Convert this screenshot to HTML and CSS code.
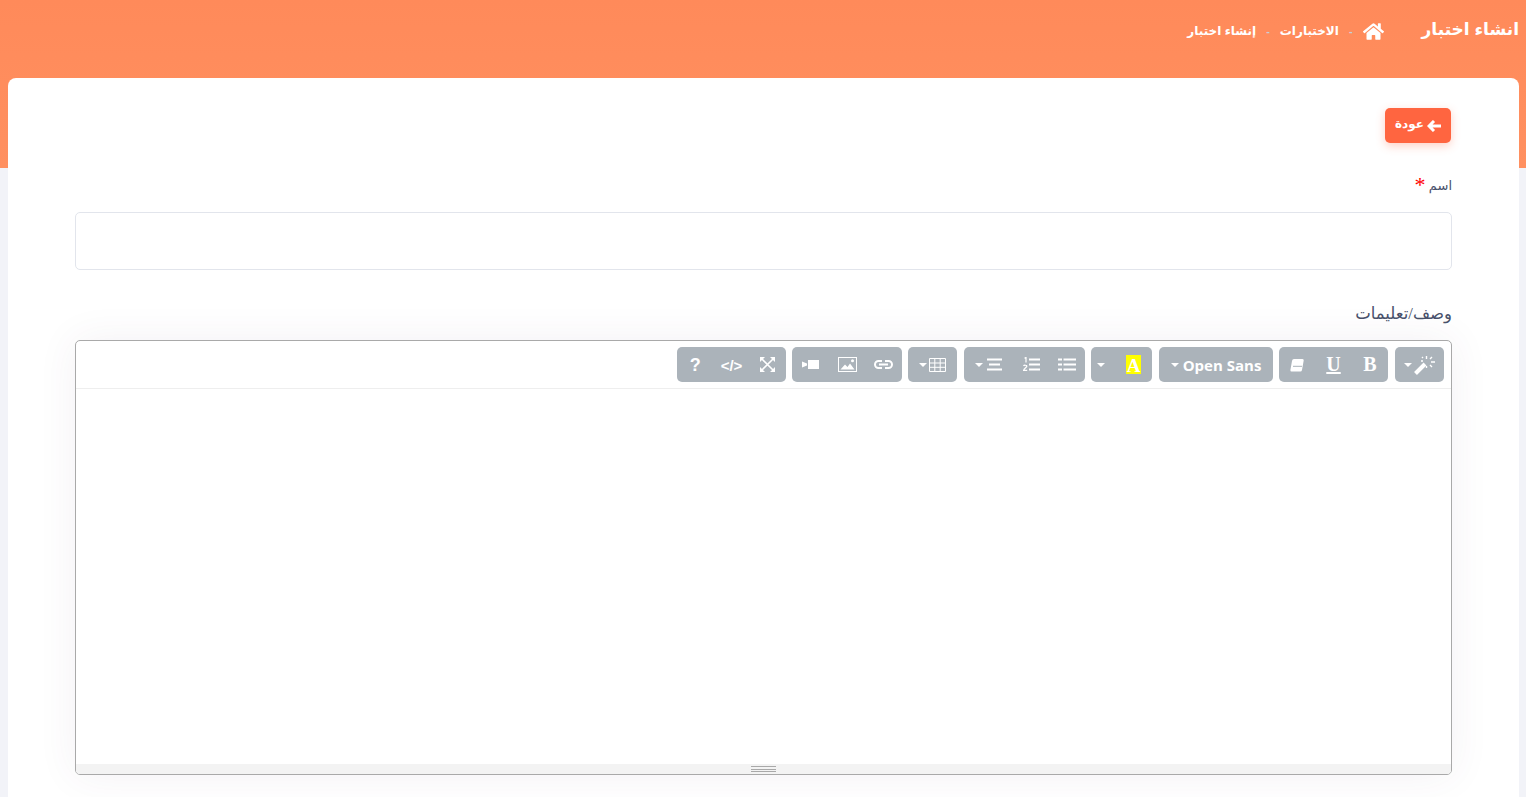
FILE: index.html
```html
<!DOCTYPE html>
<html lang="ar" dir="rtl">
<head>
<meta charset="utf-8">
<title>انشاء اختبار</title>
<link rel="stylesheet" href="styles.css">
</head>
<body>
<header class="hero">
  <h1 class="hero-title">انشاء اختبار</h1>
  <nav class="crumbs">
    <svg class="home" viewBox="0 0 576 512"><path fill="currentColor" d="M280.400 148.300 96 300.100V464a16 16 0 0 0 16 16l112.100-.3a16 16 0 0 0 15.900-16V368a16 16 0 0 1 16-16h64a16 16 0 0 1 16 16v95.600a16 16 0 0 0 16 16.100L464 480a16 16 0 0 0 16-16V300L295.700 148.300a12.200 12.200 0 0 0-15.300 0zM571.600 251.500 488 182.600V44.100a12 12 0 0 0-12-12h-56a12 12 0 0 0-12 12v72.600L318.500 43a48 48 0 0 0-61 0L4.300 251.500a12 12 0 0 0-1.600 16.900l25.500 31A12 12 0 0 0 45.200 301l235.200-193.700a12.200 12.200 0 0 1 15.300 0L530.900 301a12 12 0 0 0 16.900-1.600l25.500-31a12 12 0 0 0-1.700-16.900z"/></svg>
    <span class="sep">-</span>
    <span class="crumb">الاختبارات</span>
    <span class="sep">-</span>
    <span class="crumb">إنشاء اختبار</span>
  </nav>
</header>
<main class="card">
  <a class="back" href="#">
    <svg class="back-arrow" viewBox="0 0 14 12"><path d="M14 6H2.500M7 1 2 6l5 5" fill="none" stroke="currentColor" stroke-width="3"/></svg>
    <span class="back-text">عودة</span>
  </a>
  <label class="label first">اسم <span class="req">*</span></label>
  <div class="input"></div>
  <label class="label second">وصف/تعليمات</label>
  <section class="editor">
    <div class="toolbar">
      <div class="group g-magic">
        <svg width="21" height="20" viewBox="0 0 21 20"><path d="M1.500 18.500 11 9" stroke="#fff" stroke-width="4" fill="none"/><path d="M12.500 1v3M12.500 11v2M17 7h4M7 6h2M16 4l2-2M16 10l2 2M9 3 8 2" stroke="#fff" stroke-width="1.400" fill="none"/></svg>
        <span class="caret"></span>
      </div>
      <div class="group g-style">
        <span class="tb bold">B</span>
        <span class="tb under">U</span>
        <span class="tb"><svg width="14" height="14" viewBox="0 0 14 14"><path d="M4 1h8.500q1.500 0 1.200 1.500L12 12q-.3 1.500-1.700 1.500H1.500Q.2 13.500.4 12L2 3q.3-2 2-2z" fill="#fff"/><path d="M3 8.300h9" stroke="#abb3ba" stroke-width="1"/></svg></span>
      </div>
      <div class="group g-font"><span class="font-name">Open Sans</span><span class="caret"></span></div>
      <div class="group g-color">
        <span class="hl">A</span>
        <span class="caret"></span>
      </div>
      <div class="group g-para">
        <span class="tb cell"><svg width="18" height="13" viewBox="0 0 18 13"><path d="M0 1.500h4M5.500 1.500H18M0 6.500h4M5.500 6.500H18M0 11.500h4M5.500 11.500H18" stroke="#fff" stroke-width="2.200"/></svg></span>
        <span class="tb cell"><svg width="17" height="15" viewBox="0 0 17 15"><path d="M6 2.500h11M6 7.500h11M6 12.500h11" stroke="#fff" stroke-width="2.200"/><path d="M1.500 1.200 3 .5v5M.5 9c.5-1.200 3.500-1 3.300.4-.1 1-2.800 2-3.200 3.900H4.200" stroke="#fff" stroke-width="1.200" fill="none"/></svg></span>
        <span class="tb align"><svg width="15" height="13" viewBox="0 0 15 13"><path d="M0 1.500h15M2 6.500h11M0 11.500h15" stroke="#fff" stroke-width="2"/></svg><span class="caret"></span></span>
      </div>
      <div class="group g-table">
        <svg width="17" height="14" viewBox="0 0 17 14"><path d="M.5.500h16v13H.5zM.5 5h16M.5 9.300h16M5.800.5v13M11.200.5v13" stroke="#fff" fill="none"/></svg>
        <span class="caret"></span>
      </div>
      <div class="group g-insert">
        <span class="tb"><svg width="19" height="9" viewBox="0 0 19 9"><path d="M8 1H4.500a3.500 3.500 0 0 0 0 7H8M11 1h3.500a3.500 3.500 0 0 1 0 7H11" fill="none" stroke="#fff" stroke-width="2"/><path d="M5 4.500h9" stroke="#fff" stroke-width="2"/></svg></span>
        <span class="tb"><svg width="19" height="15" viewBox="0 0 19 15"><rect x=".5" y=".5" width="18" height="14" fill="none" stroke="#fff"/><path d="M2.500 12.500l4.500-5 2.500 2.500 2.500-3.500 4.500 6z" fill="#fff"/><circle cx="14.500" cy="3.800" r="1.500" fill="#fff"/></svg></span>
        <span class="tb"><svg width="17" height="9" viewBox="0 0 17 9"><rect x="6" y="0" width="11" height="9" fill="#fff"/><path d="M0 1.500 5 3.500v2L0 7.500z" fill="#fff"/></svg></span>
      </div>
      <div class="group g-misc">
        <span class="tb"><svg width="15" height="15" viewBox="0 0 15 15"><path d="M2 2l11 11M13 2 2 13" stroke="#fff" stroke-width="1.600"/><path d="M0 0h5L0 5zM15 0h-5l5 5zM0 15h5l-5-5zM15 15h-5l5-5z" fill="#fff"/></svg></span>
        <span class="tb code">&lt;/&gt;</span>
        <span class="tb help">?</span>
      </div>
    </div>
    <div class="edit-area"></div>
    <div class="resizer"><span class="grip"></span></div>
  </section>
</main>
</body>
</html>
```
FILE: styles.css
```css
* { box-sizing: border-box; }
html, body { height: 100%; }
body {
  margin: 0;
  background: #f2f3f8;
  font-family: "DejaVu Sans", "Noto Sans", sans-serif;
  color: #48465b;
  display: flex;
  flex-direction: column;
}
.hero {
  height: 168px;
  flex: none;
  background: linear-gradient(180deg, #ff8a5a 0%, #ff9060 100%);
  display: flex;
  align-items: flex-start;
  gap: 38px;
  padding: 15px 7px 0 0;
  color: #fff;
}
.hero-title {
  margin: 2px 0 0;
  font-size: 17px;
  line-height: 26px;
  font-weight: 700;
  font-family: "Liberation Sans", "DejaVu Sans", sans-serif;
}
.crumbs {
  display: flex;
  align-items: center;
  gap: 10px;
  height: 32px;
  font-size: 12px;
  font-weight: 700;
  font-family: "Liberation Sans", "DejaVu Sans", sans-serif;
}
.home { width: 21px; height: 19px; }
.sep { color: #c9cdd6; font-size: 11px; }
.card {
  flex: 1;
  margin: -90px 7px 0 8px;
  background: #fff;
  border-radius: 8px 8px 0 0;
  padding: 30px 67px 0 67px;
  display: flex;
  flex-direction: column;
  align-items: stretch;
}
.back {
  align-self: flex-start;
  margin-right: 1px;
  width: 66px;
  height: 35px;
  border-radius: 5px;
  background: #ff6540;
  box-shadow: 0 3px 10px rgba(255, 101, 64, .3);
  color: #fff;
  text-decoration: none;
  font-size: 12px;
  font-weight: 700;
  font-family: "Liberation Sans", "DejaVu Sans", sans-serif;
  display: flex;
  align-items: center;
  justify-content: center;
  gap: 3px;
}
.back-arrow { width: 14px; height: 12px; }
.back-text { padding-bottom: 3px; }
.label {
  display: block;
  line-height: 20px;
  font-family: "Liberation Serif", "DejaVu Sans", serif;
  color: #48516b;
}
.label.first { margin-top: 33px; font-size: 13px; }
.label.second { margin-top: 34px; font-size: 16.500px; }
.req { color: #f00; font-size: 22px; line-height: 16px; vertical-align: -2px; }
.input {
  margin-top: 16px;
  height: 58px;
  border: 1px solid #e2e5ec;
  border-radius: 5px;
}
.editor {
  margin-top: 16px;
  height: 435px;
  flex: none;
  border: 1px solid #a9a9a9;
  border-radius: 5px;
  background: #fff;
  display: flex;
  flex-direction: column;
  box-shadow: 0 0 40px rgba(82, 63, 105, .07);
  overflow: hidden;
}
.toolbar {
  height: 48px;
  flex: none;
  padding: 6px 7px 0;
  display: flex;
  gap: 6px;
  border-bottom: 1px solid #eeeeee;
}
.group {
  height: 35px;
  border-radius: 5px;
  background: #abb3ba;
  display: flex;
  align-items: center;
  justify-content: center;
  color: #fff;
}
.g-magic, .g-table { width: 49px; gap: 2px; }
.g-magic { margin-left: 1px; }
.g-style, .g-misc { width: 109px; }
.g-insert { width: 110px; }
.g-font { width: 114px; gap: 4px; margin-left: 1px; }
.g-color {
  width: 61px;
  justify-content: space-between;
  padding: 0 11px 0 6px;
}
.g-para { width: 121px; margin-left: 1px; }
.tb {
  flex: 1;
  display: flex;
  align-items: center;
  justify-content: center;
  gap: 4px;
  font-weight: 700;
}
.tb.cell { flex: none; width: 36px; }
.caret {
  width: 0;
  height: 0;
  flex: none;
  border-left: 4px solid transparent;
  border-right: 4px solid transparent;
  border-top: 4px solid #fff;
}
.bold, .under {
  font-family: "Liberation Serif", serif;
  font-size: 20px;
}
.under { text-decoration: underline; }
.font-name {
  font-family: "Open Sans", sans-serif;
  font-size: 15px;
  font-weight: 700;
}
.hl {
  display: block;
  width: 15px;
  height: 19px;
  background: #ff0;
  color: #fff;
  font-family: "Liberation Serif", serif;
  font-weight: 700;
  font-size: 19px;
  line-height: 21px;
  text-align: center;
}
.code {
  font-family: "Liberation Sans", sans-serif;
  font-size: 15px;
  direction: ltr;
  padding-top: 1px;
}
.help {
  font-family: "Liberation Sans", sans-serif;
  font-size: 18px;
  padding-top: 2px;
}
.edit-area { flex: 1; }
.resizer {
  height: 10px;
  flex: none;
  background: #f3f3f3;
  display: flex;
  justify-content: center;
  align-items: center;
}
.grip {
  width: 25px;
  height: 6px;
  border-top: 1px solid #a9a9a9;
  border-bottom: 1px solid #a9a9a9;
  background: linear-gradient(#a9a9a9, #a9a9a9) center / 100% 1px no-repeat;
}
```
